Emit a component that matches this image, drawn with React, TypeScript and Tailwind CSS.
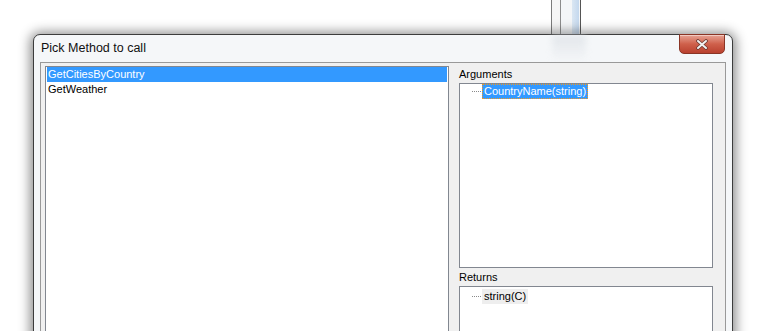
import React from 'react';

const font = { fontFamily: '"Liberation Sans", Arial, sans-serif' };

const methods = ['GetCitiesByCountry', 'GetWeather'];

const TreeItem: React.FC<{ label: string; selected?: boolean; className?: string }> = ({
  label,
  selected,
  className = '',
}) => (
  <div className={`flex items-center h-[15px] pl-[12px] ${className}`}>
    <span className="w-[9px] h-0 border-t border-dotted border-[#8a8a8a] mr-[1px]" />
    <span
      className={`h-[15px] px-[1px] leading-[13px] border ${
        selected
          ? 'bg-[#3399ff] text-white border-dotted border-[#f29a1f]'
          : 'bg-[#eeeeee] text-black border-transparent'
      }`}
    >
      {label}
    </span>
  </div>
);

const CloseButton: React.FC = () => (
  <div className="absolute right-[7px] top-[-1px] w-[46px] h-[20px] rounded-b-[5px] border border-[#8a3526] bg-gradient-to-b from-[#e6a294] via-[#cf604b] to-[#b9412f] shadow-[inset_0_1px_0_rgba(255,255,255,0.45)] flex items-center justify-center">
    <svg width="14" height="11" viewBox="0 0 14 11">
      <path d="M3 2 L11 9 M11 2 L3 9" stroke="#6b3a33" strokeWidth="3.6" strokeLinecap="round" />
      <path d="M3 2 L11 9 M11 2 L3 9" stroke="#f2f2f2" strokeWidth="2" strokeLinecap="round" />
    </svg>
  </div>
);

const App: React.FC = () => {
  return (
    <div className="relative w-[766px] h-[331px] bg-white overflow-hidden" style={font}>
      {/* window behind the dialog */}
      <div className="absolute left-[551px] top-0 h-[34px] flex">
        <div className="w-[1px] bg-[#7c7c7c]" />
        <div className="w-[8px] bg-[#f6f6f6]" />
        <div className="w-[1px] bg-[#8c8c8c]" />
        <div className="w-[11px] bg-[#f4f6f8]" />
        <div className="w-[7px] bg-gradient-to-r from-[#dbe7f3] to-[#c4d8ee]" />
        <div className="w-[1px] bg-[#f4f6f8]" />
        <div className="w-[1px] bg-[#555555]" />
      </div>

      {/* dialog */}
      <div className="absolute left-[33px] top-[34px] w-[700px] h-[310px] rounded-t-[7px] border border-[#3c3c3c] bg-[#f5f7f9] shadow-[0_1px_12px_3px_rgba(0,0,0,0.45)] flex flex-col">
        {/* glass blur of the window behind */}
        <div className="absolute left-[518px] top-0 w-[34px] h-[28px] bg-gradient-to-b from-[#d6dbe1] to-transparent blur-[3px] opacity-60" />

        <div className="relative h-[27px] pl-[7px] flex items-center text-[12.5px] text-[#111111]">
          Pick Method to call
          <CloseButton />
        </div>

        <div className="relative mx-[6px] flex-1 border border-[#999999] bg-[#f0f0f0] pl-[4px] pr-[12px] pt-[3px] flex gap-[10px] text-[11px]">
          {/* method list */}
          <div className="w-[404px] border border-[#828790] bg-white px-[1px]">
            {methods.map((m, i) => (
              <div
                key={m}
                className={`h-[15px] leading-[15px] pl-[1px] ${i === 0 ? 'bg-[#3399ff] text-white' : 'text-black'}`}
              >
                {m}
              </div>
            ))}
          </div>

          {/* arguments / returns */}
          <div className="w-[254px] flex flex-col">
            <div className="h-[17px] leading-[17px] text-black">Arguments</div>
            <div className="h-[185px] border border-[#828790] bg-white">
              <TreeItem label="CountryName(string)" selected />
            </div>
            <div className="h-[18px] leading-[18px] text-black">Returns</div>
            <div className="flex-1 border border-[#828790] bg-white pt-[2px]">
              <TreeItem label="string(C)" />
            </div>
          </div>
        </div>
      </div>
    </div>
  );
};

export default App;
